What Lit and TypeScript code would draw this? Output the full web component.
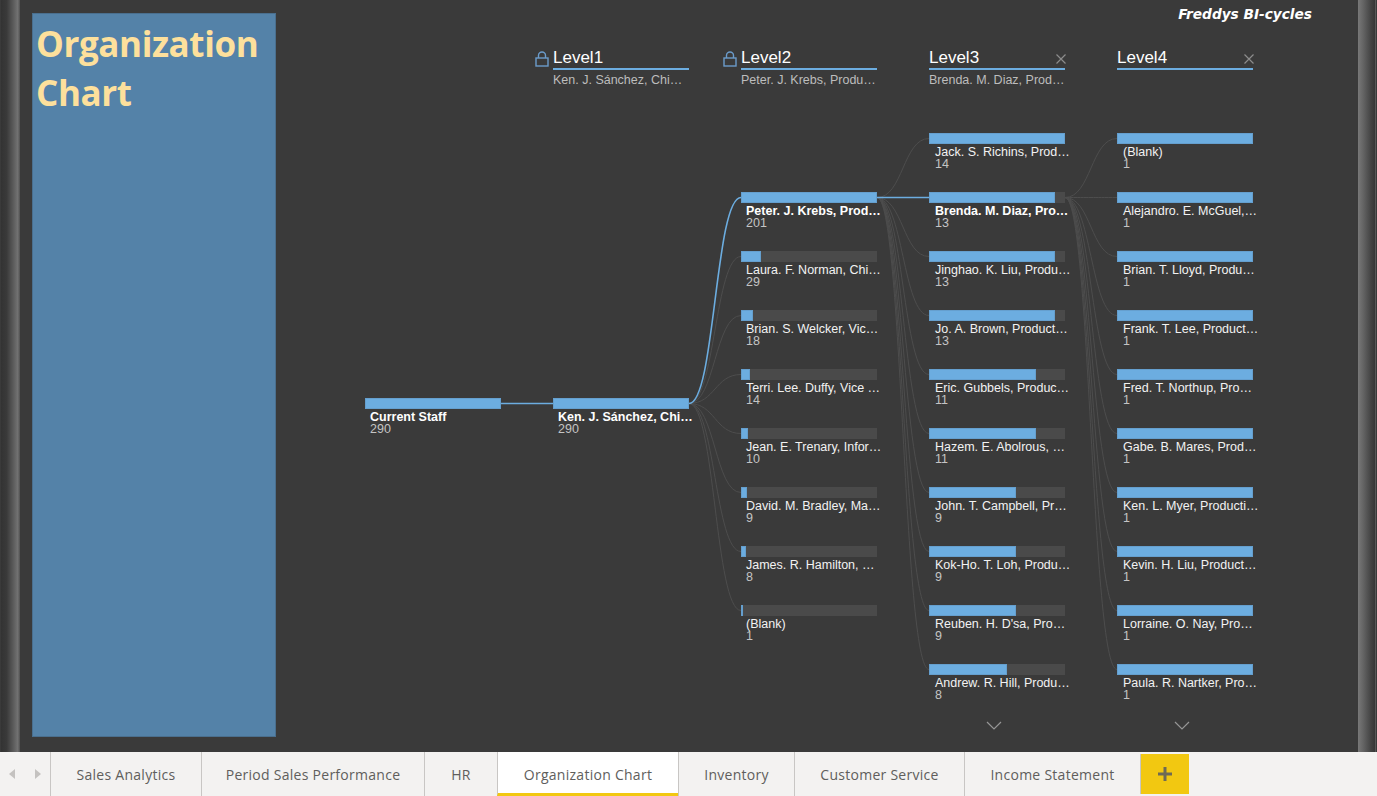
import { LitElement, html, svg, css } from 'lit';
import { customElement } from 'lit/decorators.js';

interface TreeNode {
  label: string;
  value: number;
  active?: boolean;
}

interface Level {
  name?: string;
  filter?: string;
  locked?: boolean;
  closable?: boolean;
  top: number;
  more?: boolean;
  nodes: TreeNode[];
}

const COL_X = 89;
const COL_STEP = 188;
const BAR_W = 136;
const BAR_H = 11;
const ROW_STEP = 59;
const HEADER_BOTTOM = 88;

const levels: Level[] = [
  { top: 398, nodes: [{ label: 'Current Staff', value: 290, active: true }] },
  {
    name: 'Level1', filter: 'Ken. J. Sánchez, Chi…', locked: true, top: 398,
    nodes: [{ label: 'Ken. J. Sánchez, Chi…', value: 290, active: true }],
  },
  {
    name: 'Level2', filter: 'Peter. J. Krebs, Produ…', locked: true, top: 192,
    nodes: [
      { label: 'Peter. J. Krebs, Prod…', value: 201, active: true },
      { label: 'Laura. F. Norman, Chi…', value: 29 },
      { label: 'Brian. S. Welcker, Vic…', value: 18 },
      { label: 'Terri. Lee. Duffy, Vice …', value: 14 },
      { label: 'Jean. E. Trenary, Infor…', value: 10 },
      { label: 'David. M. Bradley, Ma…', value: 9 },
      { label: 'James. R. Hamilton, …', value: 8 },
      { label: '(Blank)', value: 1 },
    ],
  },
  {
    name: 'Level3', filter: 'Brenda. M. Diaz, Prod…', closable: true, top: 133, more: true,
    nodes: [
      { label: 'Jack. S. Richins, Prod…', value: 14 },
      { label: 'Brenda. M. Diaz, Pro…', value: 13, active: true },
      { label: 'Jinghao. K. Liu, Produ…', value: 13 },
      { label: 'Jo. A. Brown, Product…', value: 13 },
      { label: 'Eric. Gubbels, Produc…', value: 11 },
      { label: 'Hazem. E. Abolrous, …', value: 11 },
      { label: 'John. T. Campbell, Pr…', value: 9 },
      { label: 'Kok-Ho. T. Loh, Produ…', value: 9 },
      { label: 'Reuben. H. D\'sa, Pro…', value: 9 },
      { label: 'Andrew. R. Hill, Produ…', value: 8 },
    ],
  },
  {
    name: 'Level4', closable: true, top: 133, more: true,
    nodes: [
      { label: '(Blank)', value: 1 },
      { label: 'Alejandro. E. McGuel,…', value: 1 },
      { label: 'Brian. T. Lloyd, Produ…', value: 1 },
      { label: 'Frank. T. Lee, Product…', value: 1 },
      { label: 'Fred. T. Northup, Pro…', value: 1 },
      { label: 'Gabe. B. Mares, Prod…', value: 1 },
      { label: 'Ken. L. Myer, Producti…', value: 1 },
      { label: 'Kevin. H. Liu, Product…', value: 1 },
      { label: 'Lorraine. O. Nay, Pro…', value: 1 },
      { label: 'Paula. R. Nartker, Pro…', value: 1 },
    ],
  },
];

const tabs = [
  'Sales Analytics',
  'Period Sales Performance',
  'HR',
  'Organization Chart',
  'Inventory',
  'Customer Service',
  'Income Statement',
];

@customElement('app-root')
export class AppRoot extends LitElement {
  static styles = css`
    :host {
      display: flex;
      flex-direction: column;
      width: 1377px;
      height: 796px;
      overflow: hidden;
      background: #3a3a3a;
    }

    .report {
      display: flex;
      height: 752px;
      background: #3a3a3a;
    }

    .edge {
      width: 19px;
      flex: none;
      background: linear-gradient(90deg, #333 0%, #3a3a3a 30%, #5e5e5e 68%, #727272 88%, #505050 100%);
    }

    .edge.left {
      margin-left: 1px;
    }

    .edge.right {
      width: 18px;
      margin-right: 1px;
      background: linear-gradient(90deg, #787878 0%, #636363 30%, #434343 72%, #383838 92%, #6a6a6a 100%);
    }

    .sidebar {
      flex: none;
      width: 244px;
      height: 724px;
      margin: 13px 0 0 12px;
      padding: 5px 3px;
      box-sizing: border-box;
      border: 1px solid #4a6f8e;
      background: #5482a8;
      color: #fde09c;
      font: 700 35px/49px 'Open Sans', sans-serif;
      letter-spacing: -0.4px;
    }

    .tree {
      position: relative;
      flex: 1;
      display: flex;
      flex-direction: column;
      font-family: 'Liberation Sans', Arial, sans-serif;
    }

    .links {
      position: absolute;
      inset: 0;
      width: 100%;
      height: 100%;
    }

    .brand {
      height: 48px;
      box-sizing: border-box;
      padding: 6px 46px 0 0;
      text-align: right;
      color: #fff;
      font: italic 700 13.7px/16px 'DejaVu Sans', sans-serif;
    }

    .columns {
      position: relative;
      display: flex;
      gap: 52px;
      padding-left: 89px;
    }

    .column {
      width: 136px;
      flex: none;
    }

    .header {
      position: relative;
      height: 40px;
    }

    .header-title {
      height: 20px;
      box-sizing: content-box;
      border-bottom: 2px solid #6cade0;
      color: #fff;
      font-size: 17px;
      line-height: 20px;
    }

    .filter {
      margin-top: 1px;
      color: #bdbdbd;
      font-size: 12.5px;
      line-height: 18px;
      white-space: nowrap;
    }

    .lock {
      position: absolute;
      left: -18px;
      top: 3px;
    }

    .close {
      position: absolute;
      right: -1px;
      top: 6px;
    }

    .nodes {
      display: flex;
      flex-direction: column;
      gap: 11px;
    }

    .node {
      height: 48px;
    }

    .track {
      height: 11px;
      background: #4a4a4a;
    }

    .fill {
      height: 100%;
      box-sizing: border-box;
      background: #6cade0;
      border: 1px solid #659fce;
    }

    .label {
      margin: 2px 0 0 5px;
      color: #f2f2f2;
      font-size: 12.5px;
      line-height: 13px;
      white-space: nowrap;
    }

    .node.active .label {
      color: #fff;
      font-weight: 700;
    }

    .value {
      margin: -1px 0 0 5px;
      color: #c4c4c4;
      font-size: 12.5px;
      line-height: 13px;
    }

    .column:nth-child(n + 4) .label,
    .column:nth-child(n + 4) .value {
      margin-left: 6px;
    }

    .more {
      display: block;
      margin: 9px 0 0 57px;
    }

    .tabs {
      display: grid;
      grid-template-columns: 50px 151px 223px 73px 181px 116px 170px 176px 49px;
      height: 44px;
      background: #f3f2f1;
      color: #605e5c;
      font: 14px 'Open Sans', sans-serif;
    }

    .nav {
      display: flex;
      align-items: center;
      justify-content: space-between;
      padding: 0 8px;
    }

    .tab {
      display: flex;
      align-items: center;
      justify-content: center;
      box-sizing: border-box;
      border-left: 1px solid #c8c6c4;
      white-space: nowrap;
      letter-spacing: 0.27px;
    }

    .tab.current {
      padding-top: 3px;
      background: #fff;
      border-bottom: 3px solid #f2c811;
    }

    .add {
      display: flex;
      align-items: center;
      justify-content: center;
      height: 40px;
      margin-top: 2px;
      border-left: 1px solid #c8c6c4;
      background: #f2c811;
    }
  `;

  private _linkPath(col: number, fromRow: number, toRow: number) {
    const x0 = COL_X + col * COL_STEP + BAR_W;
    const x1 = COL_X + (col + 1) * COL_STEP;
    const y0 = levels[col].top + fromRow * ROW_STEP + BAR_H / 2;
    const y1 = levels[col + 1].top + toRow * ROW_STEP + BAR_H / 2;
    const mid = (x0 + x1) / 2;
    return `M${x0} ${y0}C${mid} ${y0} ${mid} ${y1} ${x1} ${y1}`;
  }

  private _renderLinks() {
    const links = levels.slice(0, -1).map((level, col) => {
      const from = level.nodes.findIndex(n => n.active);
      return levels[col + 1].nodes.map((node, row) => ({ d: this._linkPath(col, from, row), active: node.active }));
    }).flat();
    // active links go last so they sit on top of the grey ones
    links.sort((a, b) => Number(!!a.active) - Number(!!b.active));
    return html`
      <svg class="links" fill="none">
        ${links.map(l => svg`<path d=${l.d} stroke=${l.active ? '#6cade0' : '#4d4d4d'} stroke-width=${l.active ? 1.6 : 1}></path>`)}
      </svg>
    `;
  }

  private _renderHeader(level: Level) {
    if (!level.name) return html`<div class="header"></div>`;
    return html`
      <div class="header">
        ${level.locked ? html`
          <svg class="lock" width="14" height="16" viewBox="0 0 14 16" fill="none" stroke="#6b9ccb" stroke-width="1.4">
            <rect x="1" y="7" width="12" height="8"></rect>
            <path d="M3.5 7V4.500a3.500 3.500 0 0 1 7 0V7"></path>
          </svg>
        ` : ''}
        <div class="header-title">${level.name}</div>
        ${level.closable ? html`
          <svg class="close" width="10" height="10" viewBox="0 0 10 10" stroke="#8c8c8c" stroke-width="1.2">
            <path d="M.5.5l9 9M9.500.5l-9 9"></path>
          </svg>
        ` : ''}
        ${level.filter ? html`<div class="filter">${level.filter}</div>` : ''}
      </div>
    `;
  }

  private _renderColumn(level: Level) {
    const max = Math.max(...level.nodes.map(n => n.value));
    return html`
      <div class="column">
        ${this._renderHeader(level)}
        <div class="nodes" style="margin-top:${level.top - HEADER_BOTTOM}px">
          ${level.nodes.map(node => html`
            <div class="node ${node.active ? 'active' : ''}">
              <div class="track">
                <div class="fill" style="width:${(node.value / max) * BAR_W}px"></div>
              </div>
              <div class="label">${node.label}</div>
              <div class="value">${node.value}</div>
            </div>
          `)}
        </div>
        ${level.more ? html`
          <svg class="more" width="16" height="9" viewBox="0 0 16 9" fill="none" stroke="#969696" stroke-width="1.2">
            <path d="M1 1l7 7 7-7"></path>
          </svg>
        ` : ''}
      </div>
    `;
  }

  render() {
    return html`
      <div class="report">
        <div class="edge left"></div>
        <div class="sidebar">Organization Chart</div>
        <div class="tree">
          ${this._renderLinks()}
          <div class="brand">Freddys BI-cycles</div>
          <div class="columns">
            ${levels.map(level => this._renderColumn(level))}
          </div>
        </div>
        <div class="edge right"></div>
      </div>
      <div class="tabs">
        <div class="nav">
          <svg width="8" height="10" viewBox="0 0 8 10"><path d="M7 0v10L1 5z" fill="#c4c2c0"></path></svg>
          <svg width="8" height="10" viewBox="0 0 8 10"><path d="M1 0v10l6-5z" fill="#c4c2c0"></path></svg>
        </div>
        ${tabs.map(tab => html`
          <div class="tab ${tab === 'Organization Chart' ? 'current' : ''}">${tab}</div>
        `)}
        <div class="add">
          <svg width="14" height="14" viewBox="0 0 14 14" fill="#6e6a55"><path d="M5.500 0h3v5.500H14v3H8.500V14h-3V8.500H0v-3h5.500z"></path></svg>
        </div>
      </div>
    `;
  }
}
